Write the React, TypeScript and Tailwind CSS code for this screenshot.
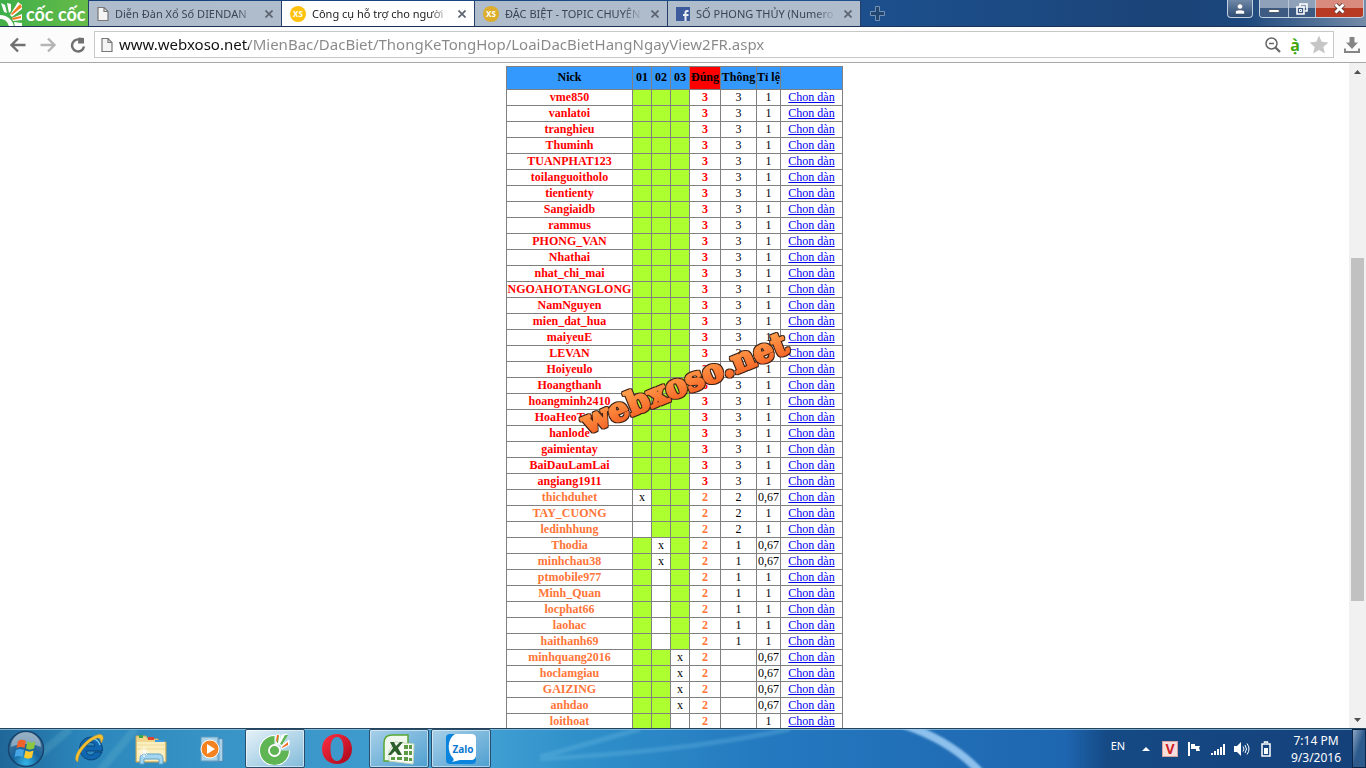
import type { ReactNode } from 'react';

type Mark = 'g' | 'x' | '-';

interface Row {
  nick: string;
  days: Mark[];
  hits: number;
  streak: string;
  ratio: string;
}

const full = (nick: string): Row => ({ nick, days: ['g', 'g', 'g'], hits: 3, streak: '3', ratio: '1' });

const two = (nick: string, days: string, streak: string, ratio: string): Row => ({
  nick,
  days: days.split('') as Mark[],
  hits: 2,
  streak,
  ratio,
});

const rows: Row[] = [
  full('vme850'),
  full('vanlatoi'),
  full('tranghieu'),
  full('Thuminh'),
  full('TUANPHAT123'),
  full('toilanguoitholo'),
  full('tientienty'),
  full('Sangiaidb'),
  full('rammus'),
  full('PHONG_VAN'),
  full('Nhathai'),
  full('nhat_chi_mai'),
  full('NGOAHOTANGLONG'),
  full('NamNguyen'),
  full('mien_dat_hua'),
  full('maiyeuE'),
  full('LEVAN'),
  full('Hoiyeulo'),
  full('Hoangthanh'),
  full('hoangminh2410'),
  full('HoaHeoTayD'),
  full('hanlode'),
  full('gaimientay'),
  full('BaiDauLamLai'),
  full('angiang1911'),
  two('thichduhet', 'xgg', '2', '0,67'),
  two('TAY_CUONG', '-gg', '2', '1'),
  two('ledinhhung', '-gg', '2', '1'),
  two('Thodia', 'gxg', '1', '0,67'),
  two('minhchau38', 'gxg', '1', '0,67'),
  two('ptmobile977', 'g-g', '1', '1'),
  two('Minh_Quan', 'g-g', '1', '1'),
  two('locphat66', 'g-g', '1', '1'),
  two('laohac', 'g-g', '1', '1'),
  two('haithanh69', 'g-g', '1', '1'),
  two('minhquang2016', 'ggx', '', '0,67'),
  two('hoclamgiau', 'ggx', '', '0,67'),
  two('GAIZING', 'ggx', '', '0,67'),
  two('anhdao', 'ggx', '', '0,67'),
  two('loithoat', 'gg-', '', '1'),
];

function PageIcon() {
  return (
    <svg className="h-4 w-3 shrink-0" viewBox="0 0 12 16" fill="#f4f4f4" stroke="#777" strokeWidth="1.2">
      <path d="M1 1.5h6l4 4v9H1z" />
      <path d="M7 1.5v4h4" fill="none" />
    </svg>
  );
}

function XsIcon({ dim = false }: { dim?: boolean }) {
  return (
    <span
      className={`flex h-4 w-4 shrink-0 items-center justify-center rounded-full text-[8px] font-bold text-white ${dim ? 'bg-[#dcae2b]' : 'bg-[#ffc20e]'}`}
    >
      XS
    </span>
  );
}

function FacebookIcon() {
  return (
    <svg className="h-3.5 w-3.5 shrink-0" viewBox="0 0 14 14">
      <rect width="14" height="14" fill="#3c5a9c" />
      <path d="M12.5 4H11c-1.200 0-1.500.6-1.500 1.500V14M7 8h5.500" stroke="#e8edf5" strokeWidth="2" fill="none" />
    </svg>
  );
}

function Tab({ icon, title, active = false }: { icon: ReactNode; title: string; active?: boolean }) {
  return (
    <div
      className={`mt-px flex h-[26px] w-[193px] min-w-0 items-center border-r border-[#22406b] pl-2 pr-1 text-[11px] ${active ? 'bg-white text-[#222]' : 'bg-[#afbccb] text-[#3a4553]'}`}
    >
      {icon}
      <a
        href="#"
        className="ml-1.5 min-w-0 flex-1 whitespace-nowrap [mask-image:linear-gradient(90deg,#000_85%,transparent)]"
      >
        {title}
      </a>
      <button aria-label="Đóng thẻ" className="ml-1 flex h-4 w-4 shrink-0 items-center justify-center">
        <svg className="h-2 w-2" viewBox="0 0 8 8" stroke="#5b6470" strokeWidth="1.7">
          <path d="M.5.5l7 7M7.500.5l-7 7" />
        </svg>
      </button>
    </div>
  );
}

function CocCocLogo() {
  return (
    <div className="flex h-[27px] w-[88px] shrink-0 items-center bg-linear-to-r from-[#3cae49] to-[#66bb48]">
      <svg className="h-[27px] w-6 shrink-0" viewBox="0 0 24 27">
        <path d="M0 15c7 0 13 5 14 12H0z" fill="#fff" />
        <path d="M0 19c5 0 8 3 9 8H0z" fill="#45b048" />
        <path d="M1 3l4 2 2 8-3-1zM7 3l4 1v7l-2 2z" fill="#fff" />
        <path d="M10 15L18 2l4 3v4L12 17z" fill="#fff" />
        <path d="M11 14l9-10 2 3-10 8z" fill="#f47b20" />
        <path d="M12 18l10-4v6l-9 1z" fill="#fff" />
        <path d="M12 18l9-2v2l-8 2z" fill="#f47b20" />
        <path d="M14 22l8 1v4h-7z" fill="#fff" />
      </svg>
      <span className="ml-0.5 whitespace-nowrap font-['Lato',sans-serif] text-lg font-bold leading-6 text-white">
        cốc cốc
      </span>
    </div>
  );
}

function WindowButtons() {
  return (
    <div className="mr-0.5 ml-auto flex items-start gap-1.5">
      <button
        aria-label="Hồ sơ"
        className="flex h-[18px] w-[26px] items-center justify-center rounded-b border border-t-0 border-[#c3d0df] bg-linear-to-b from-[#7189a7] to-[#2d4c75]"
      >
        <svg className="h-3 w-3" viewBox="0 0 12 12" fill="#fff" stroke="#394c66" strokeWidth=".6">
          <circle cx="6" cy="3.500" r="2.700" />
          <path d="M1.500 11V9c0-1.500 1.500-2 4.500-2s4.500.5 4.500 2v2z" />
        </svg>
      </button>
      <div className="flex h-[18px] overflow-hidden rounded-b border border-t-0 border-[#c3d0df]">
        <button
          aria-label="Thu nhỏ"
          className="flex w-[29px] items-center justify-center border-r border-[#bac7d6] bg-linear-to-b from-[#8fa1b8] from-50% to-[#3c5a82] to-50%"
        >
          <span className="mt-1 h-1 w-3 rounded-xs border border-[#4c5866] bg-white" />
        </button>
        <button
          aria-label="Khôi phục"
          className="flex w-[27px] items-center justify-center border-r border-[#bac7d6] bg-linear-to-b from-[#8fa1b8] from-50% to-[#3c5a82] to-50%"
        >
          <svg className="h-3 w-3" viewBox="0 0 12 12" fill="none" stroke="#fff" strokeWidth="1.600">
            <path d="M4 3V1h7v7H9" />
            <path d="M1 4h7v7H1z" />
            <path d="M3.500 6.500h2v2h-2z" strokeWidth="1" />
          </svg>
        </button>
        <button
          aria-label="Đóng"
          className="flex w-[47px] items-center justify-center bg-linear-to-b from-[#d98c7e] from-45% to-[#b93a22] to-50%"
        >
          <svg className="h-[11px] w-[13px]" viewBox="0 0 13 11">
            <path d="M2.500 1.500l8 8M10.500 1.500l-8 8" stroke="#5c3434" strokeWidth="4.500" />
            <path d="M2.500 1.500l8 8M10.500 1.500l-8 8" stroke="#fff" strokeWidth="2.800" />
          </svg>
        </button>
      </div>
    </div>
  );
}

function TabBar() {
  return (
    <header className="flex h-[27px] shrink-0 items-start overflow-hidden border-b border-[#1a3255] bg-[linear-gradient(90deg,#173f78_0%,#1c4f8c_65%,#1b4478_85%,#1b477c_91%,#748ba8_100%)]">
      <CocCocLogo />
      <div className="flex border-l border-[#22406b]">
        <Tab icon={<PageIcon />} title="Diễn Đàn Xổ Số DIENDAN" />
        <Tab icon={<XsIcon />} title="Công cụ hỗ trợ cho người" active />
        <Tab icon={<XsIcon dim />} title="ĐẶC BIỆT - TOPIC CHUYÊN" />
        <Tab icon={<FacebookIcon />} title="SỐ PHONG THỦY (Numero" />
      </div>
      <button aria-label="Thẻ mới" className="ml-2 flex h-[27px] w-4 items-center justify-center">
        <svg className="h-[15px] w-[15px]" viewBox="0 0 15 15">
          <path d="M5.500.5h4v5h5v4h-5v5h-4v-5h-5v-4h5z" fill="#214671" stroke="#7592b3" />
        </svg>
      </button>
      <WindowButtons />
    </header>
  );
}

function Toolbar() {
  return (
    <nav className="flex h-9 shrink-0 items-center border-b border-[#a8a8a8] bg-[#fcfcfc] pr-1.5 pl-2.5">
      <div className="flex gap-3.5">
        <button aria-label="Quay lại">
          <svg className="h-4 w-4" viewBox="0 0 16 16" fill="none" stroke="#707070" strokeWidth="2.400">
            <path d="M15.500 8H2M8 1.500L1.500 8 8 14.500" />
          </svg>
        </button>
        <button aria-label="Tiến">
          <svg className="h-4 w-4" viewBox="0 0 16 16" fill="none" stroke="#b5b5b5" strokeWidth="2.400">
            <path d="M.5 8H14M8 1.500L14.500 8 8 14.500" />
          </svg>
        </button>
        <button aria-label="Tải lại">
          <svg className="h-4 w-4" viewBox="0 0 16 16" fill="none" stroke="#707070" strokeWidth="2.400">
            <path d="M11.500 3.500A6 6 0 1 0 14 9.500" />
            <path d="M8.500.5L14 1v5.500H8z" fill="#707070" stroke="none" />
          </svg>
        </button>
      </div>
      <div className="ml-2 flex h-[27px] min-w-0 flex-1 items-center border border-[#c8c8c8] bg-white pr-1 pl-1.5">
        <PageIcon />
        <input
          aria-label="Địa chỉ"
          defaultValue="www.webxoso.net/MienBac/DacBiet/ThongKeTongHop/LoaiDacBietHangNgayView2FR.aspx"
          className="ml-1.5 min-w-0 flex-1 bg-[linear-gradient(90deg,#111_130px,#888_130px)] bg-clip-text text-[15px] text-transparent outline-none"
        />
        <div className="flex items-center gap-2">
          <svg className="h-4 w-4" viewBox="0 0 16 16" fill="none" stroke="#666" strokeWidth="1.500">
            <circle cx="6.500" cy="6.500" r="5.500" />
            <path d="M4 6.500h5" />
            <path d="M10.500 10.500l4.500 4.500" strokeWidth="2.200" />
          </svg>
          <span className="w-3 text-center text-base leading-6 font-bold text-[#41a60b]">ạ̀</span>
          <svg className="h-5 w-5" viewBox="0 0 20 20" fill="#c6c6c6">
            <path d="M10 .5l2.700 6.300 6.800.6-5.200 4.500 1.600 6.700L10 15l-5.900 3.600 1.600-6.700L.5 7.400l6.800-.6z" />
          </svg>
        </div>
      </div>
      <button aria-label="Tải xuống" className="ml-2.5">
        <svg className="h-4 w-4" viewBox="0 0 16 16" fill="#858585">
          <path d="M5.500 0h5v5.500H14L8 12 2 5.500h3.500z" />
          <path d="M0 11.500h2V14h12v-2.500h2V16H0z" />
        </svg>
      </button>
    </nav>
  );
}

function Watermark() {
  return (
    <svg className="pointer-events-none absolute top-[262px] left-[66px] h-[115px] w-[230px]" viewBox="0 0 230 115">
      <defs>
        <linearGradient id="wm" x1="0" y1="0" x2="0" y2="1">
          <stop offset="0.2" stopColor="#ff9c4a" />
          <stop offset="1" stopColor="#f4591e" />
        </linearGradient>
        {/* dark rim grown from the letters, so the orange can be fattened too */}
        <filter id="rim" x="-5%" y="-20%" width="110%" height="140%">
          <feMorphology in="SourceAlpha" operator="dilate" radius="1" result="fat" />
          <feFlood floodColor="#3d2415" />
          <feComposite in2="fat" operator="in" result="edge" />
          <feMerge>
            <feMergeNode in="edge" />
            <feMergeNode in="SourceGraphic" />
          </feMerge>
        </filter>
      </defs>
      <g filter="url(#rim)">
        <text
          x="15"
          y="106"
          transform="rotate(-22 15 106)"
          fill="url(#wm)"
          stroke="url(#wm)"
          strokeWidth="2"
          strokeLinejoin="round"
          className="font-['DejaVu_Serif',serif] text-[32px] font-bold"
        >
          webxoso.net
        </text>
      </g>
    </svg>
  );
}

const cell = 'border border-[#808080] p-0 leading-[15px]';
const headCell = 'border border-[#808080] p-0 pb-0.5 leading-[15px]';

function ResultTable() {
  return (
    <div className="relative mx-auto w-[337px]">
      <table className="w-full table-fixed border-collapse text-center font-['Liberation_Serif',serif] text-xs text-black">
        <colgroup>
          <col className="w-[126px]" />
          <col className="w-[19px]" />
          <col className="w-[19px]" />
          <col className="w-[19px]" />
          <col className="w-[31px]" />
          <col className="w-[36px]" />
          <col className="w-[24px]" />
          <col />
        </colgroup>
        <thead>
          <tr className="h-[23px] bg-[#3399ff] whitespace-nowrap">
            <th className={headCell}>Nick</th>
            <th className={headCell}>01</th>
            <th className={headCell}>02</th>
            <th className={headCell}>03</th>
            <th className={`${headCell} bg-[#ff0000]`}>Đúng</th>
            <th className={headCell}>Thông</th>
            <th className={headCell}>Tỉ lệ</th>
            <th className={headCell} />
          </tr>
        </thead>
        <tbody>
          {rows.map((row) => {
            const color = row.hits === 3 ? 'text-[#ff0000]' : 'text-[#ff7538]';
            return (
              <tr key={row.nick} className="h-4">
                <td className={`${cell} font-bold ${color}`}>{row.nick}</td>
                {row.days.map((mark, i) => (
                  <td key={i} className={`${cell} ${mark === 'g' ? 'bg-[#adff2f]' : 'bg-white'}`}>
                    {mark === 'x' ? 'x' : ''}
                  </td>
                ))}
                <td className={`${cell} font-bold ${color}`}>{row.hits}</td>
                <td className={cell}>{row.streak}</td>
                <td className={cell}>{row.ratio}</td>
                <td className={cell}>
                  <a href="#" className="text-[#0000ee] underline [text-decoration-skip-ink:none]">
                    Chọn dàn
                  </a>
                </td>
              </tr>
            );
          })}
        </tbody>
      </table>
      <Watermark />
    </div>
  );
}

function Scrollbar() {
  return (
    <div className="flex w-[17px] shrink-0 flex-col bg-[#f1f1f1]">
      <div className="flex h-[17px] items-center justify-center">
        <svg className="h-1 w-[7px]" viewBox="0 0 7 4" fill="#505050">
          <path d="M0 4l3.500-4L7 4z" />
        </svg>
      </div>
      <div className="grow-[178]" />
      <div className="mx-0.5 grow-[343] bg-[#c1c1c1]" />
      <div className="grow-[110]" />
      <div className="flex h-[17px] items-center justify-center">
        <svg className="h-1 w-[7px]" viewBox="0 0 7 4" fill="#505050">
          <path d="M0 0l3.500 4L7 0z" />
        </svg>
      </div>
    </div>
  );
}

function StartOrb() {
  return (
    <svg className="h-[38px] w-[38px]" viewBox="0 0 38 38">
      <defs>
        <radialGradient id="orb" cx="0.5" cy="0.9" r="0.8">
          <stop offset="0" stopColor="#35b5e8" />
          <stop offset="0.5" stopColor="#17639c" />
          <stop offset="1" stopColor="#4e7899" />
        </radialGradient>
      </defs>
      <circle cx="19" cy="19" r="17.500" fill="url(#orb)" stroke="#17446d" strokeWidth="1.500" />
      <path d="M4 17a15 15 0 0 1 30 0c-8-4-22-4-30 0z" fill="#fff" opacity=".4" />
      <path d="M11 11c3-2 5-1.500 8 0l-1.500 7c-3-1.500-5-1.500-8 0z" fill="#f0622b" />
      <path d="M20.500 11.500c3 1.500 5 1.500 8 0L27 18.500c-3 1.500-5 1.500-8 0z" fill="#8cc63f" />
      <path d="M9 20c3-1.500 5-1.500 8 0l-1.500 7c-3-1.500-5-1.500-8 0z" fill="#46a5e5" />
      <path d="M18.500 20.500c3 1.500 5 1.500 8 0l-1.500 7c-3 1.500-5 1.500-8 0z" fill="#fecb2f" />
    </svg>
  );
}

function ExplorerIcon() {
  return (
    <svg className="h-8 w-8" viewBox="0 0 32 32" fill="none">
      <path
        d="M18 4a11.500 11.500 0 1 0 11 15h-7c-1 2-2.500 3-4.500 3-2.500 0-4-1.500-4.200-4H29.500C30 10 25 4 18 4zm-4.500 9c.5-2.500 2.200-3.500 4.200-3.500s3.800 1 4.200 3.500z"
        fill="#0f67b1"
        stroke="#073a68"
        strokeWidth=".8"
      />
      <path d="M17 6c4-1 9 1 10 6" stroke="#6dc1ef" strokeWidth="1.500" />
      <path
        d="M5 29C-1 27 5 15 15 7 22 2 29-1 30 4c.5 2-.5 4-2 6 0-4-1-6-5-4.500C14 9 4 21 5 29z"
        fill="#f5c032"
        stroke="#d4991d"
        strokeWidth=".5"
      />
    </svg>
  );
}

function FolderIcon() {
  return (
    <svg className="h-8 w-8" viewBox="0 0 32 32">
      <path d="M1 3h10l2 3h10l1 3h7v20H1z" fill="#f0d68a" stroke="#c3a558" />
      <path d="M4 2h4v3H4z" fill="#36a84b" />
      <path d="M13 4h6v3h-6z" fill="#db4433" />
      <path d="M20 7h9v2h-9z" fill="#3d9de0" />
      <path d="M2 9h28v19H2z" fill="#fbefbf" />
      <path d="M2 12h28M2 16h28" stroke="#eedb98" />
      <path d="M5 31v-5c0-4 2-5 5-5h13c3 0 5 1 5 5v5h-4v-5H9v5z" fill="#a5d5ef" stroke="#5ba3cb" />
      <path d="M9 14v10M4 19h10M6 16l6 6M12 16l-6 6" stroke="#fff" />
    </svg>
  );
}

function MediaPlayerIcon() {
  return (
    <svg className="h-8 w-8" viewBox="0 0 32 32">
      <path d="M12 5l14 1v22l-14 1z" fill="#84b9da" stroke="#4f8bb3" />
      <path d="M4 4h17v24H4z" fill="#a9d2e9" stroke="#5c9bc1" />
      <path d="M24 6v22" stroke="#d0e9f7" />
      <circle cx="13" cy="16" r="9" fill="#f58220" stroke="#fff" />
      <path d="M10 11l8 5-8 5z" fill="#fff" />
    </svg>
  );
}

function CocCocIcon() {
  return (
    <svg className="h-8 w-8" viewBox="0 0 32 32" fill="none">
      <path d="M16 7.500a10 10 0 1 0 9.500 10" stroke="#fff" strokeWidth="11" />
      <path d="M15.500 7.500a10 10 0 1 0 10 10" stroke="#5fb553" strokeWidth="9" />
      <circle cx="15.500" cy="17.500" r="5.500" fill="#5fb553" stroke="#fff" strokeWidth="1.800" />
      <path d="M17 2h4l-1 9h-3zM23 2l5-1-5 12-3-2zM30 7v5l-7 4-1-3z" fill="#fff" stroke="#fff" />
      <path d="M18 3h2l-1 7h-1z" fill="#5fb553" />
      <path d="M17 8l1-6h2l-2 7z" fill="#f36c21" />
      <path d="M21 11l5-9h3l-6 10z" fill="#5fb553" />
      <path d="M23 14l6-5v3l-6 3z" fill="#f36c21" />
    </svg>
  );
}

function OperaIcon() {
  return (
    <svg className="h-8 w-8" viewBox="0 0 32 32">
      <defs>
        <linearGradient id="opera" x1="0" y1="0" x2="1" y2="1">
          <stop offset="0" stopColor="#ff3045" />
          <stop offset="1" stopColor="#a90518" />
        </linearGradient>
      </defs>
      <path
        fillRule="evenodd"
        fill="url(#opera)"
        d="M16 1C7 1 1 7.500 1 16s6 15 15 15 15-6.500 15-15S25 1 16 1zm0 3c4.500 0 6.500 5 6.500 12S20.500 28 16 28 9.500 23 9.500 16 11.500 4 16 4z"
      />
    </svg>
  );
}

function ExcelIcon() {
  return (
    <svg className="h-8 w-8" viewBox="0 0 32 32">
      <path d="M9 2h16v26H1V10c0-5 3-8 8-8z" fill="#f0f7ec" stroke="#58a832" strokeWidth="1.500" />
      <path d="M12 9l19 2-1 20-24-3V18z" fill="#f8fbf5" stroke="#c8dabb" />
      <path
        d="M21 12h4v4h-4zM26 12h3v4h-3zM21 18h4v4h-4zM26 18h3v4h-3zM8 24h4v3H8zM14 24h5v3h-5zM21 24h4v4h-4zM26 25h3v3h-3z"
        fill="#5c9a45"
      />
      <path d="M7 9h4l2 4 4-4h3l-5 6 4 7h-4l-3-4-4 4H5l5-7z" fill="#2b5f2b" />
    </svg>
  );
}

function ZaloIcon() {
  return (
    <span className="relative flex h-[30px] w-[30px] items-center justify-center">
      <svg className="absolute inset-0 h-full w-full" viewBox="0 0 30 30">
        <rect width="30" height="30" rx="4" fill="#0b84dd" />
        <path d="M9 0h17a4 4 0 0 1 4 4v17c0 3-2 5-5 5H14l-8 2c2-1 2-3 1-4C1 18 1 5 9 0z" fill="#fff" />
      </svg>
      <span className="relative pl-1 text-[10px] leading-3 font-bold text-[#0b78d0]">Zalo</span>
    </span>
  );
}

function TaskButton({ label, open = false, bright = false, children }: {
  label: string;
  open?: boolean;
  bright?: boolean;
  children: ReactNode;
}) {
  const frame = open ? 'border-[#284d6d] shadow-[inset_0_0_0_1px_rgba(255,255,255,0.5)]' : 'border-transparent';
  const fill = bright
    ? 'bg-linear-to-br from-[#e6f2f8] to-[#82bbda]'
    : open
      ? 'bg-linear-to-br from-[#a7d0e8] to-[#4c9fd0]'
      : '';
  return (
    <button
      aria-label={label}
      className={`flex h-[39px] w-[60px] items-center justify-center rounded-xs border ${frame} ${fill}`}
    >
      {children}
    </button>
  );
}

function Tray() {
  return (
    <div className="ml-auto flex h-full items-center text-xs text-white">
      <span className="mb-1 w-4 text-center text-[11px]">EN</span>
      <svg className="ml-4 h-1 w-2" viewBox="0 0 8 4" fill="#fff">
        <path d="M0 4l4-4 4 4z" />
      </svg>
      <span className="ml-3 flex h-4 w-4 items-center justify-center border border-[#d9a4a0] bg-[#f6dfdd] text-sm font-bold text-[#cf2027]">
        V
      </span>
      <svg className="ml-2 h-4 w-4" viewBox="0 0 16 16" fill="#fff">
        <path d="M2 1h2v14H2zM5 3h4v2h5l-1 2 1 3h-4V8H5z" />
      </svg>
      <svg className="ml-2 h-4 w-4" viewBox="0 0 16 16" fill="#fff">
        <path d="M1 12h2v2H1zM4 10h2v4H4zM7 8h2v6H7zM10 6h2v8h-2zM13 3h2v11h-2z" />
      </svg>
      <svg className="ml-2 h-4 w-4" viewBox="0 0 16 16" fill="#fff">
        <path d="M0 5h3l4-4v14l-4-4H0z" />
        <path d="M9 5.500q2 2.500 0 5M11 4q3 4 0 8M13 2.500q4 5.500 0 11" fill="none" stroke="#fff" />
      </svg>
      <svg className="ml-2 h-4 w-4" viewBox="0 0 16 16" fill="none" stroke="#fff" strokeWidth="1.500">
        <path d="M6.500 2V1h3v1M4 3h8v12H4z" />
        <path d="M6 7h4v6H6z" fill="#fff" stroke="none" />
      </svg>
      <div className="ml-4 w-[52px] text-center leading-[17px] whitespace-nowrap">
        <div>7:14 PM</div>
        <div>9/3/2016</div>
      </div>
      <button
        aria-label="Hiện màn hình"
        className="ml-2.5 h-full w-3.5 border border-[#0c2649] bg-linear-to-br from-[#8ca7c3] to-[#2d5a8c] to-50%"
      />
    </div>
  );
}

function Taskbar() {
  return (
    <footer className="relative h-10 shrink-0 border-t border-[#26435c] bg-[linear-gradient(90deg,#1f6798_0%,#2b86bb_6%,#3893c6_16%,#42a0d3_35%,#3091ca_42%,#2479bf_56%,#1e66b0_78%,#154a85_81%,#15407a_100%)]">
      <svg className="absolute inset-0 h-full w-full" viewBox="0 0 1366 39" preserveAspectRatio="none" fill="none">
        <defs>
          <filter id="soft">
            <feGaussianBlur stdDeviation="1.200" />
          </filter>
        </defs>
        <path d="M0 .5h1366" stroke="#8fc1df" strokeOpacity=".8" />
        <g filter="url(#soft)">
          <path d="M904 -4Q952 12 981 44" stroke="#99c9f2" strokeWidth="8" strokeOpacity=".9" />
          <path d="M540 28Q580 17 640 0M540 30Q690 22 790 0" stroke="#6dbce6" strokeWidth="5" strokeOpacity=".3" />
          <path d="M100 42L135 0M20 42L70 0" stroke="#7cc8d4" strokeWidth="8" strokeOpacity=".2" />
        </g>
      </svg>
      <div className="relative flex h-full items-center">
        <button aria-label="Start" className="flex w-[59px] items-center pl-[7px]">
          <StartOrb />
        </button>
        <div className="flex gap-0.5">
          <TaskButton label="Internet Explorer">
            <ExplorerIcon />
          </TaskButton>
          <TaskButton label="Windows Explorer">
            <FolderIcon />
          </TaskButton>
          <TaskButton label="Media Player">
            <MediaPlayerIcon />
          </TaskButton>
          <TaskButton label="Cốc Cốc" open bright>
            <CocCocIcon />
          </TaskButton>
          <TaskButton label="Opera">
            <OperaIcon />
          </TaskButton>
          <TaskButton label="Excel" open>
            <ExcelIcon />
          </TaskButton>
          <TaskButton label="Zalo" open>
            <ZaloIcon />
          </TaskButton>
        </div>
        <Tray />
      </div>
    </footer>
  );
}

export default function App() {
  return (
    <div className="flex h-screen flex-col overflow-hidden bg-white font-['Noto_Sans','Open_Sans',sans-serif]">
      <TabBar />
      <Toolbar />
      <div className="flex min-h-0 flex-1">
        <main className="min-w-0 flex-1 overflow-hidden pt-[3px]">
          <ResultTable />
        </main>
        <Scrollbar />
      </div>
      <Taskbar />
    </div>
  );
}
